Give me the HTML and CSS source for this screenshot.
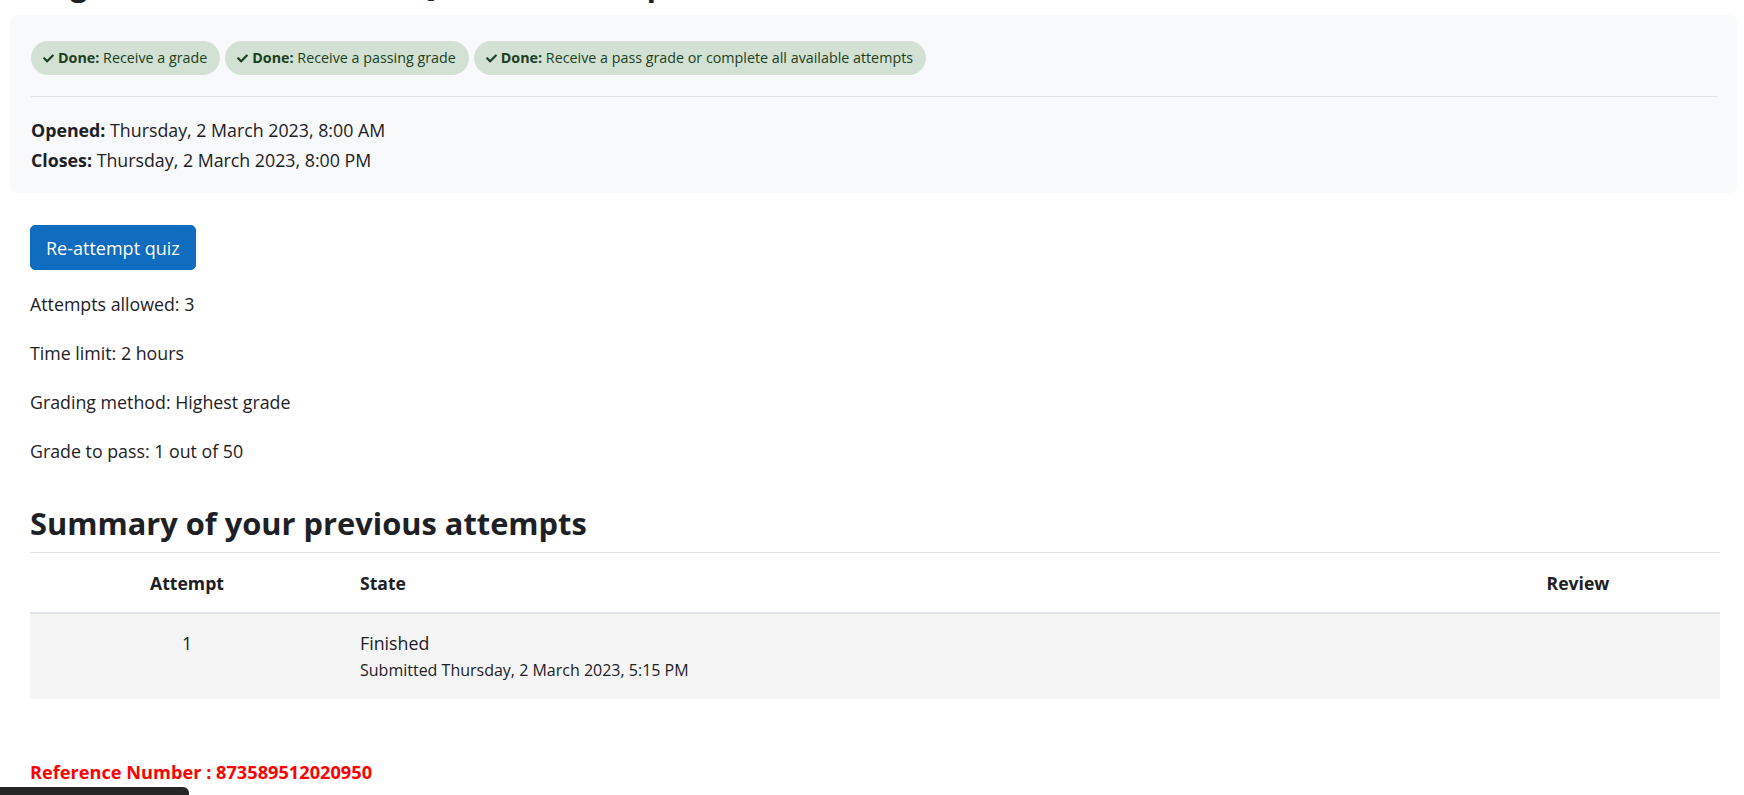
FILE: index.html
```html
<!DOCTYPE html>
<html lang="en">
<head>
<meta charset="utf-8">
<title>Quiz</title>
<link rel="stylesheet" href="styles.css">
</head>
<body>
<div class="page">
  <div class="page-header">
    <h2 class="page-title">Angle Measurement Unit Quiz: Review Topics</h2>
  </div>

  <div class="activity-info">
    <div class="badges">
      <span class="badge"><svg class="check" viewBox="0 0 512 512"><path d="M173.9 439.4 7.5 273c-10-10-10-26.2 0-36.2l36.2-36.2c10-10 26.2-10 36.2 0L192 312.7 432.1 72.6c10-10 26.2-10 36.2 0l36.2 36.2c10 10 10 26.2 0 36.2L210.1 439.4c-10 10-26.2 10-36.2 0z"/></svg><b>Done:</b>&nbsp;Receive a grade</span>
      <span class="badge"><svg class="check" viewBox="0 0 512 512"><path d="M173.9 439.4 7.5 273c-10-10-10-26.2 0-36.2l36.2-36.2c10-10 26.2-10 36.2 0L192 312.7 432.1 72.6c10-10 26.2-10 36.2 0l36.2 36.2c10 10 10 26.2 0 36.2L210.1 439.4c-10 10-26.2 10-36.2 0z"/></svg><b>Done:</b>&nbsp;Receive a passing grade</span>
      <span class="badge"><svg class="check" viewBox="0 0 512 512"><path d="M173.9 439.4 7.5 273c-10-10-10-26.2 0-36.2l36.2-36.2c10-10 26.2-10 36.2 0L192 312.7 432.1 72.6c10-10 26.2-10 36.2 0l36.2 36.2c10 10 10 26.2 0 36.2L210.1 439.4c-10 10-26.2 10-36.2 0z"/></svg><b>Done:</b>&nbsp;Receive a pass grade or complete all available attempts</span>
    </div>
    <hr class="divider">
    <div class="dates">
      <div><b>Opened:</b> Thursday, 2 March 2023, 8:00 AM</div>
      <div class="closes"><b>Closes:</b> Thursday, 2 March 2023, 8:00 PM</div>
    </div>
  </div>

  <div class="main">
    <button class="btn-primary" type="button">Re-attempt quiz</button>
    <p class="info">Attempts allowed: 3</p>
    <p class="info">Time limit: 2 hours</p>
    <p class="info">Grading method: Highest grade</p>
    <p class="info">Grade to pass: 1 out of 50</p>

    <h3 class="summary-title">Summary of your previous attempts</h3>
    <table class="attempts">
      <thead>
        <tr>
          <th class="col-attempt">Attempt</th>
          <th class="col-state">State</th>
          <th class="col-review">Review</th>
        </tr>
      </thead>
      <tbody>
        <tr>
          <td class="col-attempt">1</td>
          <td class="col-state">Finished<span class="submitted">Submitted Thursday, 2 March 2023, 5:15 PM</span></td>
          <td class="col-review"></td>
        </tr>
      </tbody>
    </table>

    <p class="ref">Reference Number : 873589512020950</p>
  </div>
</div>
<div class="footer-tab"></div>
</body>
</html>
```

FILE: styles.css
```css
* { box-sizing: border-box; }

html, body {
  margin: 0;
  padding: 0;
  background: #fff;
}

body {
  font-family: "Open Sans", "Noto Sans", "Liberation Sans", sans-serif;
  font-size: 17.8px;
  line-height: 24px;
  color: #1d2125;
  overflow: hidden;
  height: 795px;
}

.page {
  padding: 0 7px 0 10px;
}

.page-header {
  height: 15px;
  overflow: hidden;
  display: flex;
  align-items: flex-end;
  padding-left: 20px;
}

.page-title {
  margin: 0 0 12px 0;
  font-size: 30px;
  line-height: 36px;
  font-weight: 700;
  white-space: nowrap;
  color: #1d2125;
}

.activity-info {
  background: #f8f9fa;
  border-radius: 6px;
  padding: 26px 20px 21px 21px;
}

.badges {
  display: flex;
  gap: 5px;
  flex-wrap: wrap;
}

.badge {
  display: inline-flex;
  align-items: center;
  height: 34px;
  padding: 0 13px 0 12px;
  border-radius: 17px;
  background: #d2e1d4;
  color: #1c3f20;
  font-size: 14.3px;
  line-height: 34px;
  white-space: nowrap;
}

.badge b { font-weight: 700; }

.check {
  width: 11px;
  height: 11px;
  fill: #1c3f20;
  margin-right: 4px;
}

.divider {
  border: 0;
  border-top: 1px solid #dee2e6;
  margin: 21px 0 0 0;
}

.dates {
  padding-top: 21px;
  line-height: 24px;
}

.dates b { font-weight: 700; }

.closes { margin-top: 6px; }

.main {
  padding: 0 17px 0 20px;
}

.btn-primary {
  margin-top: 32px;
  height: 45px;
  padding: 0 15px;
  background: #0f6cbf;
  border: 1px solid #0f6cbf;
  border-radius: 5px;
  color: #fff;
  font-family: inherit;
  font-size: 18px;
  display: block;
}

.info {
  margin: 22px 0 0 0;
  line-height: 24px;
}

.info + .info { margin-top: 25px; }

.summary-title {
  margin: 42px 0 0 0;
  font-size: 30.8px;
  line-height: 36px;
  font-weight: 700;
  color: #1d2125;
  padding-bottom: 5px;
}

.attempts {
  width: 100%;
  border-collapse: collapse;
  margin-top: 6px;
}

.attempts th {
  font-weight: 700;
  font-size: 17.6px;
  height: 60px;
  border-top: 1px solid #dee2e6;
  border-bottom: 2px solid #dee2e6;
  padding: 2px 16px 0 16px;
  vertical-align: middle;
}

.attempts td {
  background: #f5f5f5;
  height: 86px;
  padding: 17px 16px 0 16px;
  vertical-align: top;
}

.col-attempt { width: 314px; text-align: center; }
.col-state { text-align: left; }
.col-review { width: 284px; text-align: center; }

.submitted {
  display: block;
  font-size: 16px;
  line-height: 20px;
  margin-top: 5px;
}

.ref {
  margin: 61px 0 0 0;
  color: #ff0000;
  font-weight: 700;
  font-size: 18.2px;
  line-height: 24px;
}

.footer-tab {
  position: fixed;
  left: 0;
  bottom: 0;
  width: 189px;
  height: 8px;
  background: #262626;
  border-top-right-radius: 6px;
}
```
